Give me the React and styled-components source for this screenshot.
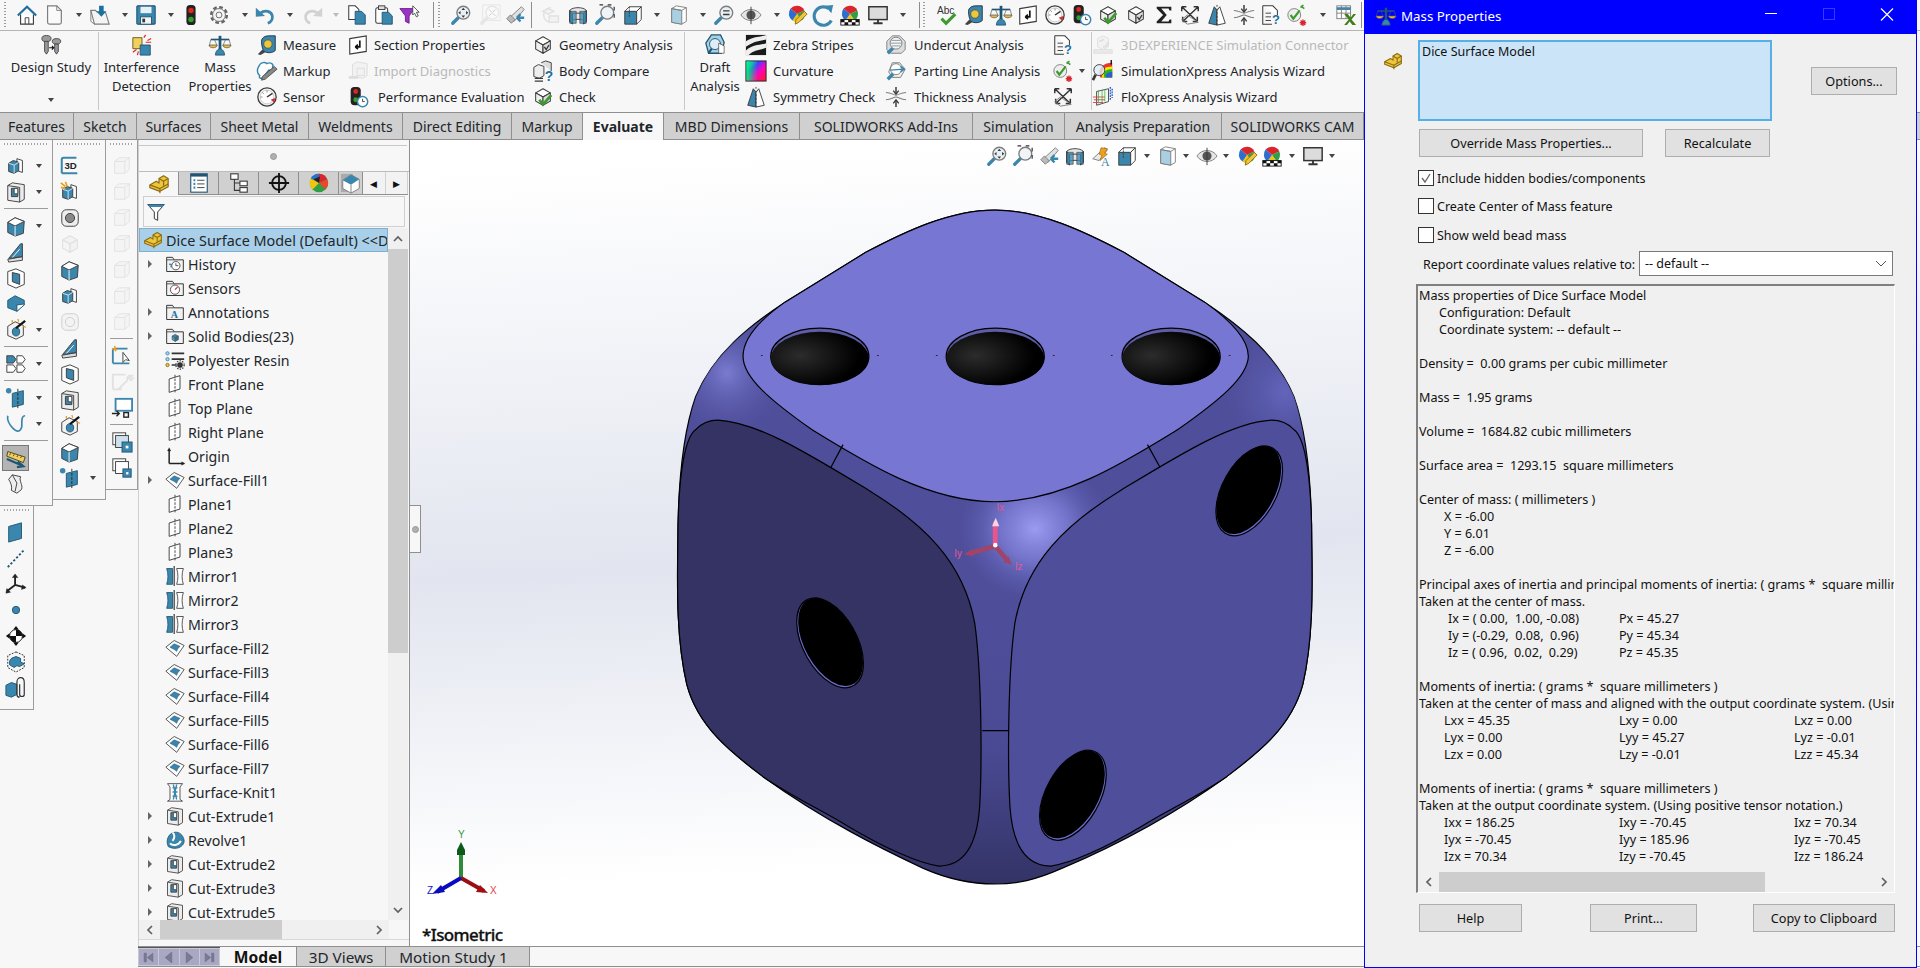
import React from 'react';
import styled, { createGlobalStyle } from 'styled-components';

const B = '#3b86ad';
const LB = '#a9cfe3';
const D = '#3a3a3a';
const G = '#7d7d7d';
const LG = '#c8c8c8';
const Y = '#f0c53c';

const Global = createGlobalStyle`
  html, body { margin: 0; padding: 0; background: #f7f7f7; }
  body { font-family: "Noto Sans", "Open Sans", "Liberation Sans", sans-serif; }
`;

const cube = (a = '#fff', b = '#efefef', c = '#dcdcdc', s = D) => (
  <g stroke={s} strokeWidth="1.1" strokeLinejoin="round">
    <path d="M12 3l8 4.5-8 4.5-8-4.5z" fill={a} />
    <path d="M4 7.5v9l8 4.5v-9z" fill={b} />
    <path d="M20 7.5v9l-8 4.5v-9z" fill={c} />
  </g>
);
const mag = (inner, fill = '#e8f0f5', handle = B, ring = G) => (
  <g>
    <path d="M9 15l-6 6" stroke={handle} strokeWidth="3.6" strokeLinecap="round" />
    <circle cx="14.5" cy="9.5" r="7" fill={fill} stroke={ring} strokeWidth="1.5" />
    {inner}
  </g>
);
const pie = (
  <g>
    <path d="M12 11V2a9 9 0 0 1 8 5z" fill="#d8262c" />
    <path d="M12 11l8-4a9 9 0 0 1-3 11z" fill="#2f9e44" />
    <path d="M12 11l5 7a9 9 0 0 1-10 0z" fill="#f1c40f" />
    <path d="M12 11l-5 7A9 9 0 0 1 5 5z" fill="#2c6fd1" />
    <path d="M12 11L5 5a9 9 0 0 1 7-3z" fill="#d8262c" />
  </g>
);
const folder = (inner) => (
  <g>
    <path d="M2 21V4h7l2 3h11v14z" fill="#f2f2f2" stroke={D} strokeWidth="1.2" />
    <path d="M2 7h9" stroke={D} strokeWidth="1" />
    {inner}
  </g>
);
const blueBox = (
  <g stroke={D} strokeWidth="1" strokeLinejoin="round">
    <path d="M13 4l6 2v13l-6-2z" fill="#fff" />
    <path d="M4 9l5-3 6 2v9l-5 3-6-2z" fill={B} />
    <path d="M4 9l6 2 5-3" fill="none" stroke="#d6e8f2" />
    <path d="M10 11v9" stroke="#d6e8f2" />
  </g>
);
const checkMark = <path d="M8 15l4 5 9-10" fill="none" stroke="#3c9a2e" strokeWidth="3" />;

const ICONS = {
  home: <g><path d="M2 12.5 12 3l10 9.5" fill="none" stroke="#1d6f9e" strokeWidth="2.4" /><path d="M5 11.5V22h14V11.5" fill="#fff" stroke={D} strokeWidth="1.2" /><path d="M10 22v-7h4v7" fill="none" stroke={D} /></g>,
  newDoc: <g><path d="M5 2h10l5 5v13a2 2 0 0 1-2 2H7a2 2 0 0 1-2-2z" fill="#fafafa" stroke={G} strokeWidth="1.3" /><path d="M15 2v5h5" fill="none" stroke={G} /></g>,
  open: <g><path d="M2 7h5l2 2h9l4 13H6z" fill="#f4f4f4" stroke={G} strokeWidth="1.2" /><path d="M2 7v12l4 3" fill="none" stroke={G} /><path d="M11 2h5v6h3l-5.5 6L8 8h3z" fill="#1d6f9e" /></g>,
  save: <g><rect x="2" y="2" width="20" height="20" rx="1" fill={B} stroke="#1f5673" strokeWidth="1.2" /><rect x="6" y="3" width="12" height="7" fill="#e8f0f5" /><rect x="6" y="14" width="12" height="8" fill="#f4f4f4" stroke="#1f5673" /><rect x="8" y="16" width="3" height="4" fill={D} /></g>,
  traffic: <g><rect x="7" y="1" width="10" height="22" rx="4" fill="#222" /><circle cx="12" cy="7" r="3" fill="#e0261c" /><circle cx="12" cy="17" r="3" fill="#32a02c" /></g>,
  gear: <g fill="none" stroke="#666"><circle cx="12" cy="12" r="8.6" strokeWidth="2.6" strokeDasharray="4 2.75" /><circle cx="12" cy="12" r="7" strokeWidth="1" /><circle cx="12" cy="12" r="3.2" strokeWidth="1" /></g>,
  undo: <g><path d="M7 10c5-4 12-2 13 3 .6 4-2 7-5 8" fill="none" stroke={B} strokeWidth="3" /><path d="M2 4v10l10-1z" fill={B} /></g>,
  redo: <g><path d="M17 10c-5-4-12-2-13 3-.6 4 2 7 5 8" fill="none" stroke="#d2d2d2" strokeWidth="3" /><path d="M22 4v10l-10-1z" fill="#d2d2d2" /></g>,
  copy: <g><path d="M3 2h7l4 4v11H3z" fill="#fff" stroke={D} strokeWidth="1.1" /><path d="M10 8h7l4 4v10H10z" fill={B} stroke="#1f5673" /></g>,
  paste: <g><rect x="3" y="4" width="13" height="17" rx="2" fill="#fff" stroke={D} strokeWidth="1.1" /><rect x="6" y="2" width="7" height="4" fill="#ddd" stroke={D} /><path d="M10 9h7l4 4v9H10z" fill={B} stroke="#1f5673" /></g>,
  filterCursor: <g><path d="M1 5h16l-6 8v8l-4-2v-6z" fill="#9a33c4" stroke="#6d1f90" /><path d="M15 2l7 7h-3l2 4-2 1-2-4-2 2z" fill="#fff" stroke={D} strokeWidth=".9" /></g>,
  zoomFit: mag(<g fill={D}><path d="M14.5 4l2 2.5h-4zM14.5 15l2-2.5h-4zM9 9.5l2.5-2v4zM20 9.5l-2.5-2v4z" /></g>),
  zoomArea: <g opacity=".35">{mag(<path d="M11 6l3 3M18 6l-3 3M11 13l3-3M18 13l-3-3" stroke={G} />, '#fff', LG, LG)}<rect x="4" y="1" width="19" height="17" fill="none" stroke={LG} /></g>,
  prevView: <g><path d="M6 15L19 3l3 3-11 13z" fill="#e0e0e0" stroke={G} /><path d="M3 16l4-4 5 5-4 4z" fill="#bbb" stroke={G} /><path d="M22 15H14M14 15l4-4M14 15l4 4" stroke={B} strokeWidth="2.6" fill="none" /></g>,
  rebuildOff: <g opacity=".45" fill="none" stroke={LG} strokeWidth="1.6"><path d="M12 4a8 8 0 1 0 8 8" /><path d="M3 8l6-3 6 3-6 3zM10 13h10v7H10z" fill="#eee" /></g>,
  section: <g stroke={D}><path d="M3 7c3-4 15-4 18 0v12c-3-3-15-3-18 0z" fill="#e7e7e7" /><path d="M3 7c0 1 3 3 3 3v12l-3-3zM21 7l-3 3v12l3-3z" fill={B} /><path d="M6 10h12" /><path d="M3 8h7v13H3zM14 8h7v13h-7z" fill={B} opacity=".75" /></g>,
  zoomSel: <g>{mag(null, '#eef4f8', B, G)}<path d="M6 1h4M15 1h4M22 3v4M22 11v4" stroke="#333" strokeWidth="1.3" /></g>,
  wireCube: <g stroke={D}><path d="M3 8h13v14H3z" fill={B} /><path d="M3 8l5-5h13l-5 5zM16 8l5-5v14l-5 5z" fill="#fff" /><path d="M8 3v11" strokeDasharray="2 1" /></g>,
  dispCube: <g stroke={G}><path d="M4 5l5-3 11 2v15l-5 3-11-2z" fill="#fff" /><path d="M4 5l11 2v15L4 20z" fill={LB} /><path d="M4 5l11 2 5-3" fill="none" /></g>,
  magEq: mag(<path d="M11 7.5h7M11 11.5h7" stroke={D} strokeWidth="1.5" />),
  eye: <g><path d="M1 12c5-8 17-8 22 0-5 8-17 8-22 0z" fill="#e6e6e6" stroke={G} /><circle cx="12" cy="12" r="5" fill="#555" /><path d="M12 3v19" stroke={D} /></g>,
  piePen: <g>{pie}<path d="M10 22l1-5 9-9 3 3-9 9z" fill="#f0c53c" stroke="#8a6d12" /></g>,
  rotate: <g><path d="M20 18a10 10 0 1 1-3-13" fill="none" stroke={B} strokeWidth="3.4" /><path d="M13 2l9-1-2 9z" fill={B} /></g>,
  scene: <g>{pie}<rect x="2" y="17" width="20" height="6" fill="#fff" stroke="#111" /><path d="M2 17h4v3H2zM10 17h4v3h-4zM18 17h4v3h-4zM6 20h4v3H6zM14 20h4v3h-4z" fill="#111" /></g>,
  monitor: <g><rect x="2" y="3" width="20" height="14" fill="#dcdcdc" stroke="#333" strokeWidth="1.6" /><path d="M12 17v4M7 21h10" stroke="#333" strokeWidth="2" /></g>,
  viewAnno: <g><path d="M3 15L16 3l3 2-9 12z" fill="#e9e9e9" stroke={G} /><path d="M12 3l7 1-3 5 3 1-8 7 2-6-3-1z" fill="#f0a020" stroke="#8a5a10" strokeWidth=".6" /><text x="12" y="23" fontFamily="Liberation Serif, serif" fontSize="13" fill="#3b86ad">A</text></g>,
  abc: <g><text x="1" y="11" fontFamily="Liberation Sans, sans-serif" fontSize="11" fill="#333">Abc</text><path d="M6 16l5 5 10-10" fill="none" stroke="#3c9a2e" strokeWidth="3.4" /></g>,
  tape: <g><path d="M6 8c0-4 4-6 8-6h7v16c-3 3-9 3-12 1-2-2-3-7-3-11z" fill={B} stroke="#234" /><circle cx="13" cy="11" r="4.6" fill="#e9c83a" stroke="#555" /><path d="M7 17l-5 5 3 1 5-3z" fill="#444" /></g>,
  scale: <g><path d="M12 2v15" stroke="#1f5673" strokeWidth="3" /><path d="M2 6h20" stroke="#1f5673" strokeWidth="1.8" /><path d="M7 23c0-4 3-7 5-7s5 3 5 7z" fill={B} stroke="#1f5673" /><path d="M0 12h9c0 4-9 4-9 0zM15 12h9c0 4-9 4-9 0z" fill="#e9b93a" stroke="#555" strokeWidth=".8" /><path d="M2 6L.5 12M6 6l2.5 6M18 6l-2.5 6M22 6l1.5 6" stroke="#555" strokeWidth=".7" /></g>,
  sectProp: <g><path d="M3 5l18-3v17L3 22z" fill="#fff" stroke={D} strokeWidth="1.2" /><path d="M14 7v7H9M9 14l3-2.5M9 14l3 2.5" fill="none" stroke="#111" strokeWidth="1.8" /></g>,
  gauge: <g><circle cx="12" cy="12" r="10" fill="#f2f2f2" stroke={D} strokeWidth="1.4" /><circle cx="12" cy="12" r="7.5" fill="#fff" stroke={LG} /><path d="M12 12l6-4" stroke="#333" strokeWidth="1.6" /><path d="M16 15l5-2-1 5z" fill="#d8262c" /><path d="M5 12h2M12 5v2M7 7l1.5 1.5" stroke={G} /></g>,
  perf: <g><rect x="4" y="1" width="11" height="20" rx="4" fill="#222" /><circle cx="9.5" cy="6" r="2.6" fill="#e0261c" /><circle cx="9.5" cy="15" r="2.6" fill="#32a02c" /><circle cx="17" cy="17" r="5.6" fill="#fff" stroke={B} strokeWidth="1.6" /><path d="M17 14v3h2.4" stroke={D} fill="none" /></g>,
  checkCube: <g>{cube()}{checkMark}</g>,
  geomCube: <g>{cube()}<path d="M13.5 14l2 3 3-5" fill="none" stroke="#333" strokeWidth="1.4" /></g>,
  sigma: <path d="M4 3h16v4h-2l-1-2H9l6 7-6 7h8l1-2h2v4H4v-2l7-7-7-7z" fill="#222" />,
  cross: <g fill="none" stroke="#333" strokeWidth="1.6"><path d="M3 3l17 16M21 3L4 19M3 3h5M3 3v5M21 3h-5M21 3v5M4 19v-5M4 19h5M20 19h-5M20 19v-5" /><path d="M9 12l-6 5 6 5 12-2z" stroke={G} strokeWidth="1" /></g>,
  symmetry: <g stroke={D} strokeWidth="1"><path d="M3 21L9 3l3 4v16z" fill={B} /><path d="M21 21L15 3l-3 4v16z" fill="#fff" /><path d="M12 1v22" strokeDasharray="2 2" /></g>,
  thickness: <g fill="none" stroke={D} strokeWidth="1.1"><path d="M1 7c6 0 8 3 11 3s5-3 11-3M1 15c6 0 8-3 11-3s5 3 11 3" stroke={G} /><path d="M12 1v7M12 23v-7" strokeWidth="1.6" /><path d="M9 5l3 4 3-4M9 19l3-4 3 4" strokeWidth="1.4" /></g>,
  docQ: <g><path d="M3 2h11l5 5v5" fill="#fff" stroke={D} strokeWidth="1.1" /><path d="M3 2v20h10" fill="none" stroke={D} strokeWidth="1.1" /><path d="M6 10h6M6 14h6M6 18h6" stroke={D} /><text x="13" y="22" fontFamily="Liberation Sans, sans-serif" fontWeight="700" fontSize="14" fill="#1d6f9e">?</text></g>,
  checkX: <g><circle cx="9" cy="12" r="7" fill="#eee" stroke={G} />{<path d="M5 12l3 4 7-9" fill="none" stroke="#3c9a2e" strokeWidth="2.4" />}<path d="M19 1l-3 3M16 2l4 3" stroke="#3c9a2e" strokeWidth="1.6" /><path d="M16 18l5 5M21 18l-5 5M18.5 17v7M15 20.5h7" stroke="#d8262c" strokeWidth="1.5" /></g>,
  tableX: <g><rect x="2" y="2" width="15" height="14" fill="#fff" stroke={G} /><path d="M2 5h15" stroke={B} strokeWidth="3" /><path d="M2 10h15M7 2v14M12 2v14" stroke={G} /><path d="M10 11h4l3 4 3-4h3l-5 6 5 6h-4l-3-4-3 4h-3l5-6z" fill="#3f7f18" /></g>,
  bolts: <g fill="#9a9a9a" stroke={D} strokeWidth=".9"><ellipse cx="7" cy="5" rx="5" ry="3.4" /><path d="M5 8h4v11l-2 3-2-3z" /><ellipse cx="18" cy="8" rx="4.6" ry="3" /><path d="M16 11h4v8l-2 3-2-3z" /><path d="M10 15h5M13 13l2 2-2 2" fill="none" strokeWidth="1.2" stroke="#111" /></g>,
  interference: <g><path d="M2 4h10v12H2z" fill="#f0d060" stroke="#6d5a10" /><path d="M10 12h11v11H10z" fill={B} stroke="#1f5673" /><path d="M14 4l2-3M18 7l4-2M16 9h6M2 20l4-3M7 23l1-4" stroke="#e0261c" strokeWidth="1.3" /></g>,
  markup: <g><path d="M3 7c2-5 7-5 9-3 3-2 8 0 6 4 2 2 0 4-4 3l-7 9c-3 0-4-1-3-3C1 15 1 10 3 7z" fill="#fff" stroke={B} strokeWidth="1.6" /><path d="M6 22l1-4 13-11 3 3-13 11z" fill="#888" stroke={D} strokeWidth=".8" /></g>,
  importDiag: <g opacity=".55"><path d="M6 5l5-3 11 2v13l-5 3-11-2z" fill="#eee" stroke={LG} /><path d="M2 19h10" stroke={LG} strokeWidth="3" /><path d="M11 9h8v8h-8z" fill="none" stroke={LG} /></g>,
  bodyCompare: <g><path d="M2 8l5-3 6 2v10l-5 3-6-2z" fill="#eee" stroke={D} /><path d="M10 3l5-2 6 2v9" fill="#ddd" stroke={D} /><path d="M3 20h9M3 23h9" stroke={D} strokeWidth="1.4" /><text x="14" y="23" fontFamily="Liberation Sans, sans-serif" fontWeight="700" fontSize="15" fill="#1d6f9e">?</text></g>,
  draft: <g><path d="M8 1h10l4 8-3 12H5L2 10z" fill={LB} stroke="#1f5673" strokeWidth="1.4" /><path d="M5 21l4-6" stroke="#1f5673" strokeWidth="2.4" /><circle cx="12" cy="11" r="6" fill="#dfeef6" stroke="#1f5673" /><path d="M16 10l6 3v8h-6z" fill="#fff" stroke={D} strokeWidth=".7" /></g>,
  zebra: <g><rect x="1" y="1" width="22" height="22" fill="#1a1a1a" /><path d="M1 8C8 3 14 4 23 1v5C14 8 9 8 1 14zM1 18c8-7 14-5 22-8v5c-9 3-13 2-19 8H1z" fill="#eee" /></g>,
  curvature: <g><defs><linearGradient id="rainbow" x1="0" y1="0" x2="1" y2="1"><stop offset="0" stopColor="#00e0ff" /><stop offset=".35" stopColor="#4040ff" /><stop offset=".6" stopColor="#ff00c0" /><stop offset="1" stopColor="#ff2020" /></linearGradient><linearGradient id="rainbowG" x1="0" y1="0" x2="1" y2="0"><stop offset="0" stopColor="#00ff60" stopOpacity=".9" /><stop offset=".6" stopColor="#00ff60" stopOpacity="0" /></linearGradient></defs><rect x="1" y="1" width="22" height="22" fill="url(#rainbow)" stroke="#222" /><rect x="1.5" y="1.5" width="21" height="21" fill="url(#rainbowG)" /></g>,
  undercut: <g><path d="M8 2h8l6 6v9l-4 4H6l-4-4V8z" fill="#ddd" stroke={G} /><path d="M9 15l-6 6" stroke={B} strokeWidth="3.6" /><circle cx="12" cy="10" r="6.5" fill="#eef4f8" stroke={G} /><path d="M7 7h10M6 10h12M7 13h10" stroke={G} strokeWidth=".8" /></g>,
  parting: <g><path d="M8 3h8l6 7-5 9H8l-4-6z" fill="#eee" stroke={G} /><path d="M9 15l-6 6" stroke={B} strokeWidth="3.6" /><circle cx="12" cy="10" r="6" fill="#fff" stroke={G} /><path d="M6 11l14-1M17 7l4 3-4 3" fill="none" stroke={B} strokeWidth="1.5" /></g>,
  x3d: <g opacity=".5"><path d="M2 17h20v4H2z" fill="#ddd" stroke={LG} /><path d="M6 5l6-3 6 3v9l-6 3-6-3z" fill="#eee" stroke={LG} /><path d="M8 8l5-2M12 14c4 0 5-3 5-5" fill="none" stroke={LG} strokeWidth="2" /></g>,
  simX: <g><path d="M8 14C8 8 13 3 22 3v16H9z" fill="#e33" /><path d="M11 15c0-5 3-8 11-8v12H11z" fill="#ee0" /><path d="M13 16c0-4 3-6 9-6v9h-9z" fill="#2ab02a" /><path d="M15 17c0-2 3-4 7-4v6h-7z" fill="#2a5fd0" /><circle cx="8" cy="11" r="6" fill="#dfeef6" fillOpacity=".8" stroke={D} /><path d="M4 16l-3 6" stroke={D} strokeWidth="3" /><path d="M21 0v5" stroke="#111" strokeWidth="1.5" /></g>,
  floX: <g fill="none"><path d="M5 6l13-3v14L5 21z" stroke="#444" /><path d="M1 12h13M2 15h12M1 18h11" stroke="#d8404a" /><path d="M7 5v14M11 4v14M14 4v13" stroke="#2ab02a" strokeWidth=".8" /><path d="M20 1v15M22 3v10" stroke="#2a5fd0" strokeWidth="1.5" strokeDasharray="2 1" /></g>,
  part: <g stroke="#8a6d12" strokeWidth="1.3" strokeLinejoin="round"><path d="M2 13l7-4 3 2v-5l5-3 5 3v9l-9 5-11-4z" fill={Y} /><path d="M2 13l11 4 9-5" fill="none" /><path d="M13 17v5" /><path d="M12 6l5 3 5-3M17 9v5" fill="none" /></g>,
  fHist: folder(<g><circle cx="13" cy="14" r="5" fill="#fff" stroke={D} /><path d="M13 11v3h3" stroke={D} fill="none" /><path d="M5 12l3 1-1 3" fill="none" stroke={B} strokeWidth="1.6" /></g>),
  fSens: folder(<g><circle cx="12" cy="14" r="5.5" fill="#fff" stroke={D} /><path d="M12 14l3-3" stroke="#d8262c" strokeWidth="1.4" /></g>),
  fAnno: folder(<text x="7" y="19.5" fontFamily="Liberation Serif, serif" fontWeight="700" fontSize="12" fill="#1d6f9e">A</text>),
  fBody: folder(<g transform="translate(6.5 8.5) scale(.48)">{cube(B, '#4f9ac0', '#2d6f92')}</g>),
  material: <g><circle cx="3" cy="4" r="2" fill={LB} stroke={B} /><circle cx="3" cy="11" r="2" fill={LB} stroke={B} /><circle cx="3" cy="18" r="2" fill={Y} stroke="#8a6d12" /><path d="M8 4h15M8 11h15M8 18h6" stroke="#333" strokeWidth="2" /><circle cx="18" cy="18" r="3.4" fill="#333" /><circle cx="18" cy="18" r="5" fill="none" stroke="#333" strokeWidth="1.5" strokeDasharray="1.6 1.6" /></g>,
  plane: <g fill="none" stroke={D} strokeWidth="1.1"><path d="M5 6l13-4v16L5 22z" fill="#fff" /><path d="M12 1v22" strokeDasharray="3 1.5" /></g>,
  origin: <g stroke="#222" strokeWidth="1.8" fill="#222"><path d="M5 21V4M5 21h17" /><path d="M3 6l2-4 2 4zM20 19l4 2-4 2z" strokeWidth=".4" /></g>,
  fill: <g><path d="M1 11L11 3l12 6-9 13z" fill="#fff" stroke={D} /><path d="M6 11l5-4 7 3c-2 2-3 3-4 6-3-3-5-3-8-5z" fill={B} stroke="#1f5673" strokeWidth=".6" /></g>,
  mirror: <g><path d="M2 3h7v19H2c2-6 2-13 0-19z" fill={B} stroke="#1f5673" /><path d="M11 0v24" stroke="#222" strokeWidth="1.3" /><path d="M14 3h8c-2 6-2 13 0 19h-8c2-6 2-13 0-19z" fill="#fff" stroke={D} /></g>,
  knit: <g><path d="M3 2h18l-3 4v15l3 2H3l3-2V6z" fill="#fff" stroke={D} /><path d="M10 3l4 18M14 3l-4 18M9 7h6M9 12h6M9 17h6" stroke={B} strokeWidth="1.6" /></g>,
  cut: <g stroke={D}><path d="M3 5l5-3 13 2v16l-5 3-13-2z" fill="#ececec" /><path d="M3 5l13 2v16" fill="none" /><path d="M7 8h7v9H7z" fill={B} /><path d="M10 8h4v6h-4z" fill="#fff" /></g>,
  revolve: <g><path d="M4 20C1 14 3 7 8 4c7-4 14 1 15 9 0 5-5 9-11 9-3 0-6-1-8-2z" fill={B} stroke="#1f5673" /><path d="M6 16c3 3 10 3 13-3" fill="none" stroke="#fff" strokeWidth="2.4" /><path d="M9 3c3 2 3 7 0 10" fill="none" stroke="#fff" strokeWidth="2.4" /></g>,
  list: <g><rect x="3" y="2" width="18" height="20" fill="#fff" stroke="#1f5673" strokeWidth="1.2" /><path d="M3 3.5h18" stroke="#1f5673" strokeWidth="3" /><path d="M6 9h2M6 13h2M6 17h2" stroke={B} strokeWidth="2.4" /><path d="M10 9h8M10 13h8M10 17h8" stroke={D} /></g>,
  treeCfg: <g fill="#fff" stroke={D} strokeWidth="1.2"><rect x="3" y="2" width="8" height="6" /><rect x="13" y="10" width="8" height="5" /><rect x="13" y="17" width="8" height="5" /><path d="M7 8v12h6M7 12h6" fill="none" /></g>,
  target: <g fill="none" stroke="#111" strokeWidth="2"><circle cx="12" cy="12" r="7.5" /><path d="M12 1v22M1 12h22" /></g>,
  colorPie: <g><circle cx="12" cy="12" r="10" fill="#2f9e44" /><path d="M12 12V2a10 10 0 0 1 9 6z" fill="#d8262c" /><path d="M12 12L3 7a10 10 0 0 1 9-5z" fill="#2c6fd1" /><path d="M12 12l9-4a10 10 0 0 1-2 11z" fill="#e64a2a" /><path d="M12 12l-7 7a10 10 0 0 1-2-12z" fill="#f1c40f" /><path d="M12 12l-6-4 7-3z" fill="#222" /></g>,
  dim: <g><rect x="1" y="2" width="13" height="20" fill="#aaa" /><path d="M3 9l9-6 9 5v10l-9 5-9-5z" fill="#fff" stroke={G} /><path d="M3 9l9 5 9-6-9-5z" fill={B} /><path d="M12 14v9" stroke={G} /></g>,
  funnel: <g><path d="M2 3h20l-8 9v10l-4-2v-8z" fill="#fff" stroke={D} strokeWidth="1.2" /><path d="M2 3h20l-2 3H4z" fill={B} /></g>,
  boss: blueBox,
  chamfer: <g><path d="M3 8l8-5 10 4-1 13-9 3-8-4z" fill={B} stroke={D} /><path d="M3 8l8 4 10-5-10-4z" fill="#fff" stroke={D} /><path d="M11 12v11" stroke="#fff" /></g>,
  rib: <g stroke={D}><path d="M3 20l16-3v4L4 23z" fill="#ddd" /><path d="M4 19L17 3h2v14z" fill={B} /><path d="M8 18l8-9" stroke="#fff" /></g>,
  shell: <g stroke={D}><path d="M3 5l9-3 9 4v13l-9 4-9-4z" fill="#fff" /><path d="M8 6l8 2v11l-8-3z" fill={B} /></g>,
  block: <g stroke="#1f5673"><path d="M3 8l8-5 10 5v5l-8 7-10-4z" fill={B} /><path d="M13 20l8-7" stroke="#fff" /><path d="M13 13v7l8-7v-1z" fill="#fff" /></g>,
  wizard: <g><path d="M3 8l8-5 9 4v11l-8 4-9-4z" fill="#f3f3f3" stroke={D} /><ellipse cx="12" cy="14" rx="4" ry="4.5" fill={B} stroke="#1f5673" /><path d="M12 10L22 2" stroke="#111" strokeWidth="2.4" /><path d="M8 1v3M14 0l1 3M20 8l3 1" stroke="#e8a020" strokeWidth="1.4" /></g>,
  pattern: <g stroke={D} strokeWidth="1" fill="#fff"><path d="M2 3h7l3 4-3 4H2z" fill={B} /><path d="M13 3h6l3 4-3 4h-6zM2 13h7l3 4-3 4H2zM13 13h6l3 4-3 4h-6z" /></g>,
  planeRef: <g><circle cx="4" cy="4" r="3" fill={B} /><path d="M8 7l12-3v15L8 22z" fill={B} stroke="#1f5673" /><path d="M14 2v21" stroke="#222" strokeDasharray="3 1.5" /></g>,
  curve: <path d="M3 3c-1 5 2 10 6 14 3 3 6 4 8 1 3-3 0-8 2-13 1-2 2-2 3-2" fill="none" stroke={B} strokeWidth="1.8" />,
  ruler: <g><path d="M3 5l19 6-2 6L2 10z" fill="#f0d060" stroke="#4a3f10" /><path d="M6 7l-1 2M10 8l-1 2M14 9l-1 2M18 10l-1 2" stroke="#4a3f10" /><path d="M2 13l16 7M14 16l6 5-7 1" fill="none" stroke="#1f5673" strokeWidth="2.4" /></g>,
  deform: <g><path d="M8 2l9 2c-2 5 3 9 1 14l-5 4-6-3c1-5-1-9-3-12z" fill="#eee" stroke={D} /><path d="M8 2l5 9-2 9" fill="none" stroke={D} /></g>,
  sketch3d: <g><path d="M3 20V5q0-2 2-2h14M3 20h17" fill="none" stroke={B} strokeWidth="2.2" /><text x="6" y="15" fontFamily="Liberation Sans, sans-serif" fontWeight="700" fontSize="10.5" fill="#222">3D</text></g>,
  sketchStar: <g>{blueBox}<path d="M7 1l2 5M2 7l5 1M2 2l5 4" stroke="#e8a020" strokeWidth="1.8" /></g>,
  round: <g><rect x="3" y="3" width="18" height="18" rx="5" fill="#eee" stroke={D} /><circle cx="12" cy="12" r="5" fill="#888" stroke={D} /></g>,
  roundOff: <g opacity=".35"><rect x="3" y="3" width="18" height="18" rx="5" fill="#eee" stroke={G} /><circle cx="12" cy="12" r="5" fill="#eee" stroke={G} /></g>,
  cubeOff: <g opacity=".45"><path d="M4 7l5-4h11v13l-5 4H4z" fill="#f2f2f2" stroke={LG} /><path d="M4 7h11v13M15 7l5-4" fill="none" stroke={LG} /></g>,
  starOff: <g opacity=".5">{cube('#eee', '#f5f5f5', '#eee', LG)}</g>,
  gearOff: <g opacity=".45"><path d="M2 20V4h14M2 20h10" fill="none" stroke={LG} strokeWidth="2" /><path d="M8 20l10-10c-1-4 2-6 5-5l-3 3 2 2 3-3" fill="none" stroke={LG} strokeWidth="2" /></g>,
  newSketch: <g><path d="M2 20V6q0-2 2-2h14M2 20h18" fill="none" stroke={B} strokeWidth="2" /><path d="M4 1l1 6M1 4l6 1" stroke="#e8a020" strokeWidth="1.6" /><path d="M13 8v11l3-3 4 1z" fill="#fff" stroke={D} /></g>,
  screenSwitch: <g><rect x="5" y="2" width="18" height="13" fill="#fff" stroke={B} strokeWidth="2" /><path d="M1 18h8M6 15l3 3-3 3" fill="none" stroke="#222" strokeWidth="1.5" /><rect x="14" y="17" width="5" height="5" fill="none" stroke="#222" strokeWidth="1.5" /></g>,
  winStack: <g><rect x="2" y="2" width="14" height="13" fill="#fff" stroke={D} /><rect x="5" y="5" width="14" height="13" fill="#cfe1ec" stroke={D} /><rect x="12" y="12" width="11" height="11" fill={B} stroke="#1f5673" /><rect x="16" y="16" width="3" height="3" fill="#fff" /></g>,
  winStack2: <g><rect x="2" y="2" width="14" height="13" fill="#fff" stroke={D} /><rect x="5" y="5" width="14" height="13" fill="#fff" stroke={D} /><rect x="13" y="13" width="9" height="9" fill={B} stroke="#1f5673" /><rect x="16.5" y="16.5" width="2.5" height="2.5" fill="#fff" /></g>,
  refPlane: <path d="M4 6l14-4v17L4 23z" fill={B} stroke="#1f5673" />,
  axisLine: <path d="M3 22L21 3" stroke="#1f5673" strokeWidth="2" strokeDasharray="2.5 2" />,
  triad: <g stroke="#222" strokeWidth="2" fill="#222"><path d="M11 13V3M11 13L2 20M11 13l11 3" /><path d="M8 5l3-4 3 4zM2 17l-1 5 5-1zM19 13l4 3-5 2z" strokeWidth=".5" /></g>,
  point: <circle cx="12" cy="12" r="4" fill={B} stroke="#1f5673" />,
  com: <g><circle cx="12" cy="12" r="7" fill="#fff" stroke="#111" /><path d="M12 5a7 7 0 0 1 7 7h-7zM12 19a7 7 0 0 1-7-7h7z" fill="#111" /><path d="M12 1l3 4H9zM12 23l3-4H9zM1 12l4-3v6zM23 12l-4-3v6z" fill="#111" /></g>,
  dashCube: <g><path d="M12 1l9 4v13l-9 5-9-5V5z" fill="none" stroke="#222" strokeDasharray="2 1.4" /><path d="M7 8l5-2 5 2v4l4 2-5 3-3-1-3 2-5-3v-4z" fill={B} stroke="#1f5673" /></g>,
  boxClip: <g>{<path d="M1 9l6-3 6 2v11l-6 3-6-2z" fill={B} stroke="#1f5673" />}<path d="M16 22c-3 0-3-2-3-3V6c0-7 8-7 8 0v13c0 3-5 3-5 0V8" fill="none" stroke="#333" strokeWidth="1.3" /></g>,
};

const Svg = styled.svg`
  display: block;
  flex: none;
  overflow: visible;
`;

const Icon = ({ name, size = 22 }) => (
  <Svg width={size} height={size} viewBox="0 0 24 24">{ICONS[name]}</Svg>
);

const Page = styled.div`
  position: relative;
  width: 1920px;
  height: 968px;
  overflow: hidden;
  background: #f7f7f7;
  color: #22262b;
  font-size: 13px;
`;

// a flat run of icons laid out from the centre given for each one
const Strip = styled.div`
  display: flex;
  align-items: center;
  height: ${(p) => p.$h}px;
`;

const Slot = styled.div`
  flex: none;
  margin-left: ${(p) => p.$ml}px;
  width: ${(p) => p.$w}px;
  display: flex;
  justify-content: center;
`;

const Caret = styled.span`
  display: block;
  width: 0;
  height: 0;
  border-left: 3.5px solid transparent;
  border-right: 3.5px solid transparent;
  border-top: 4px solid ${(p) => (p.$off ? '#bbb' : '#444')};
`;

const Divider = styled.span`
  display: block;
  width: 1px;
  height: 26px;
  background: #8d8d8d;
`;

const Grip = styled.span`
  display: block;
  width: 2px;
  height: 26px;
  background: repeating-linear-gradient(#9a9a9a 0 1px, transparent 1px 3px);
`;

const iconRun = (items) => {
  let end = 0;
  return items.map(([name, center, size], i) => {
    const w = name === 'caret' || name === 'caretOff' ? 8 : name === 'div' ? 1 : name === 'grip' ? 2 : 22;
    const ml = Math.round(center - w / 2 - end);
    end = center + w / 2;
    let body = <Icon name={name} size={size || 22} />;
    if (name === 'caret') body = <Caret />;
    if (name === 'caretOff') body = <Caret $off />;
    if (name === 'div') body = <Divider />;
    if (name === 'grip') body = <Grip />;
    return <Slot key={i} $ml={ml} $w={w}>{body}</Slot>;
  });
};

const topItems = [
  ['grip', 5], ['home', 27], ['newDoc', 54], ['caret', 79], ['open', 100], ['caret', 125], ['save', 146], ['caret', 171],
  ['traffic', 191], ['gear', 219], ['caret', 245], ['undo', 265], ['caret', 290], ['redo', 313], ['caretOff', 336],
  ['copy', 357], ['paste', 384], ['filterCursor', 410], ['div', 433], ['grip', 438], ['zoomFit', 460], ['zoomArea', 489],
  ['prevView', 514], ['div', 530], ['rebuildOff', 549], ['section', 576], ['zoomSel', 603], ['wireCube', 631],
  ['caret', 655], ['dispCube', 677], ['caret', 701], ['magEq', 722], ['eye', 749], ['caret', 775], ['piePen', 795],
  ['rotate', 822], ['scene', 848], ['monitor', 876], ['caret', 901], ['div', 917], ['grip', 921], ['abc', 944],
  ['tape', 971], ['scale', 998], ['sectProp', 1025], ['gauge', 1052], ['perf', 1078], ['checkCube', 1105],
  ['geomCube', 1133], ['sigma', 1161], ['cross', 1187], ['symmetry', 1214], ['thickness', 1241], ['docQ', 1268],
  ['checkX', 1294], ['caret', 1320], ['tableX', 1343], ['div', 1358],
];

const viewItems = [
  ['zoomFit', 998], ['zoomSel', 1024], ['prevView', 1050], ['section', 1076], ['viewAnno', 1102], ['wireCube', 1128],
  ['caret', 1148], ['dispCube', 1169], ['caret', 1187], ['eye', 1208], ['caret', 1227], ['piePen', 1248], ['scene', 1273],
  ['caret', 1293], ['monitor', 1314], ['caret', 1333],
];

const TopBar = styled(Strip)`
  border-bottom: 1px solid #b4b4b4;
`;

const Ribbon = styled.div`
  display: flex;
  height: 81px;
`;

const BigButton = styled.div`
  flex: none;
  width: ${(p) => p.$w}px;
  display: flex;
  flex-direction: column;
  align-items: center;
  padding-top: 3px;
  padding-left: ${(p) => p.$pl || 0}px;
  box-sizing: border-box;
  line-height: 19px;
  text-align: center;
`;

const BigIconWrap = styled.div`
  height: 23px;
  margin-bottom: 1px;
`;

const BigCaret = styled.div`
  margin-top: 21px;
`;

const RibbonRule = styled.div`
  flex: none;
  width: 1px;
  margin: 1px 0 2px;
  background: #c9c9c9;
`;

const SmallColumn = styled.div`
  flex: none;
  width: ${(p) => p.$w}px;
  display: flex;
  flex-direction: column;
  padding-top: 1px;
`;

const SmallRow = styled.div`
  height: 26px;
  display: flex;
  align-items: center;
  gap: ${(p) => p.$gap || 5}px;
  white-space: nowrap;
  color: ${(p) => (p.$off ? '#b9b9b9' : 'inherit')};
`;

const TabBar = styled.div`
  display: flex;
  height: 28px;
  box-sizing: border-box;
  border-top: 1px solid #8f8f8f;
  border-bottom: 1px solid #8f8f8f;
  background: #d0d0d0;
  font-size: 14px;
`;

const MainTab = styled.div`
  flex: none;
  width: ${(p) => p.$w}px;
  box-sizing: border-box;
  border-right: 1px solid #8f8f8f;
  display: flex;
  align-items: center;
  justify-content: center;
  white-space: nowrap;
  overflow: hidden;
  font-weight: ${(p) => (p.$active ? 700 : 400)};
  background: ${(p) => (p.$active ? '#f7f7f7' : 'transparent')};
  height: ${(p) => (p.$active ? 27 : 26)}px;
`;

const Workspace = styled.div`
  display: flex;
  height: 828px;
`;

const ToolDock = styled.div`
  flex: none;
  width: 138px;
  display: flex;
  align-items: flex-start;
`;

const DockStack = styled.div`
  flex: none;
  width: 53px;
  display: flex;
  flex-direction: column;
`;

const Palette = styled.div`
  flex: none;
  width: ${(p) => p.$w}px;
  height: ${(p) => p.$h}px;
  box-sizing: border-box;
  border-right: 1px solid #9c9c9c;
  border-bottom: 1px solid #9c9c9c;
  padding-top: 13px;
  position: relative;
  &::before {
    content: '';
    position: absolute;
    left: 4px;
    right: 4px;
    top: 3px;
    height: 2px;
    background: repeating-linear-gradient(90deg, #a5a5a5 0 1px, transparent 1px 3px);
  }
`;

const PaletteRow = styled.div`
  height: 26px;
  display: flex;
  align-items: center;
  justify-content: flex-start;
  padding-left: ${(p) => p.$pl || 5}px;
  box-sizing: border-box;
`;

const PaletteButton = styled.div`
  width: 27px;
  height: 26px;
  margin-left: -3px;
  display: flex;
  align-items: center;
  justify-content: center;
  box-sizing: border-box;
  ${(p) => p.$active && 'background: #b4b4b4; border: 1px solid #777;'}
`;

const PaletteCaret = styled.span`
  margin-left: ${(p) => p.$ml || 7}px;
`;

const PaletteRule = styled.div`
  height: 1px;
  margin: 3px 4px 4px;
  background: #9c9c9c;
`;

const RightPane = styled.div`
  flex: 1;
  display: flex;
  flex-direction: column;
  min-width: 0;
`;

const PaneRow = styled.div`
  flex: none;
  height: 806px;
  display: flex;
`;

const TreePanel = styled.div`
  flex: none;
  width: 272px;
  box-sizing: border-box;
  display: flex;
  flex-direction: column;
  border-left: 1px solid #cfcfcf;
  border-right: 1px solid #8f8f8f;
  background: #f7f7f7;
`;

const SplitHeader = styled.div`
  flex: none;
  height: 31px;
  margin: 5px 2px 0 0;
  box-sizing: border-box;
  border-top: 1px solid #c8c8c8;
  display: flex;
  justify-content: center;
  padding-top: 7px;
`;

const SplitDot = styled.span`
  display: block;
  width: 5px;
  height: 5px;
  border-radius: 50%;
  background: #b0b0b0;
  border: 1px solid #999;
`;

const TreeTabs = styled.div`
  flex: none;
  display: flex;
  height: 24px;
  margin-top: -5px;
  border-top: 1px solid #bcbcbc;
  box-sizing: border-box;
`;

const TreeTab = styled.div`
  flex: none;
  width: ${(p) => p.$w || 40}px;
  overflow: hidden;
  box-sizing: border-box;
  display: flex;
  align-items: center;
  justify-content: center;
  background: ${(p) => (p.$active ? '#f7f7f7' : '#d0d0d0')};
  border-right: 1px solid #8f8f8f;
  border-bottom: ${(p) => (p.$active ? 'none' : '1px solid #8f8f8f')};
`;

const TreeScroller = styled.div`
  flex: none;
  width: 45px;
  display: flex;
  background: #f2f2f2;
  border-bottom: 1px solid #8f8f8f;
`;

const ScrollerButton = styled.div`
  flex: 1;
  display: flex;
  align-items: center;
  justify-content: center;
  border-right: 1px solid #d0d0d0;
  font-size: 9px;
  color: #111;
`;

const FilterBox = styled.div`
  flex: none;
  height: 31px;
  margin: 1px 4px 1px 4px;
  box-sizing: border-box;
  border: 1px solid #cfcfcf;
  display: flex;
  align-items: center;
  padding-left: 2px;
`;

const TreeBody = styled.div`
  flex: 1;
  min-height: 0;
  display: flex;
`;

const TreeList = styled.div`
  flex: none;
  width: 249px;
  overflow: hidden;
`;

const RootRow = styled.div`
  height: 24px;
  box-sizing: border-box;
  background: #a9cfe9;
  border: 1px solid #7fb0d2;
  display: flex;
  align-items: center;
  gap: 3px;
  padding-left: 3px;
  white-space: nowrap;
  overflow: hidden;
  font-size: 14.4px;
`;

const TreeRow = styled.div`
  height: 24px;
  display: flex;
  align-items: center;
  white-space: nowrap;
  font-size: 14.2px;
`;

const Expander = styled.span`
  flex: none;
  width: 26px;
  display: flex;
  justify-content: flex-end;
  padding-right: 13px;
  box-sizing: border-box;
  &::before {
    content: '';
    display: ${(p) => (p.$show ? 'block' : 'none')};
    border-left: 4px solid #666;
    border-top: 4px solid transparent;
    border-bottom: 4px solid transparent;
  }
`;

const RowLabel = styled.span`
  margin-left: 3px;
`;

const VScroll = styled.div`
  flex: none;
  width: 20px;
  display: flex;
  flex-direction: column;
  background: #f0f0f0;
`;

const ScrollArrow = styled.div`
  flex: none;
  height: 21px;
  display: flex;
  align-items: center;
  justify-content: center;
`;

const VThumb = styled.div`
  flex: none;
  height: 404px;
  background: #cdcdcd;
`;

const VTrack = styled.div`
  flex: 1;
`;

const HScroll = styled.div`
  flex: none;
  height: 19px;
  display: flex;
  margin-right: 20px;
  background: #f0f0f0;
`;

const HArrow = styled.div`
  flex: none;
  width: ${(p) => p.$w}px;
  display: flex;
  align-items: center;
  justify-content: center;
`;

const HThumb = styled.div`
  flex: none;
  width: ${(p) => p.$w}px;
  background: #cdcdcd;
`;

const TreeFoot = styled.div`
  flex: none;
  height: 6px;
  border-top: 1px solid #d8d8d8;
`;

const Viewport = styled.div`
  flex: 1;
  position: relative;
  overflow: hidden;
  background: linear-gradient(177deg, #fff 4%, #e2e5ef 50%, #fff 85%);
`;

const ViewBar = styled(Strip)`
  position: absolute;
  left: -1px;
  top: 5px;
  margin-left: -410px;
`;

const SplitHandle = styled.div`
  position: absolute;
  left: 0;
  top: 365px;
  width: 11px;
  height: 48px;
  box-sizing: border-box;
  background: #f7f7f7;
  border: 1px solid #8f8f8f;
  border-left: none;
  display: flex;
  align-items: center;
  justify-content: center;
`;

const DiceSvg = styled.svg`
  position: absolute;
  left: 0;
  top: 0;
`;

const AxisSvg = styled.svg`
  position: absolute;
  left: 20px;
  top: 688px;
  overflow: visible;
`;

const ViewName = styled.div`
  position: absolute;
  left: 12px;
  top: 783px;
  font-size: 17px;
  font-weight: 500;
  letter-spacing: -0.6px;
  -webkit-text-stroke: 0.3px #111;
  color: #111;
`;

const BottomTabs = styled.div`
  flex: none;
  height: 21px;
  display: flex;
  box-sizing: border-box;
  border-top: 1px solid #8f8f8f;
  border-bottom: 1px solid #8f8f8f;
  background: #f7f7f7;
`;

const NavCluster = styled.div`
  flex: none;
  width: 82px;
  display: flex;
  gap: 1px;
  padding: 1px;
  box-sizing: border-box;
  border-top: 1px solid #555;
  background: #c9c9d4;
`;

const NavButton = styled.div`
  flex: 1;
  background: #a8a8c4;
  display: flex;
  align-items: center;
  justify-content: center;
`;

const SheetTab = styled.div`
  flex: none;
  width: ${(p) => p.$w}px;
  box-sizing: border-box;
  padding-right: ${(p) => p.$pr || 0}px;
  display: flex;
  align-items: center;
  justify-content: center;
  white-space: nowrap;
  font-size: ${(p) => (p.$active ? 15.6 : 15.3)}px;
  border-right: 1px solid #8f8f8f;
  background: ${(p) => (p.$active ? '#f7f7f7' : '#d0d0d0')};
  font-weight: ${(p) => (p.$active ? 700 : 400)};
  color: ${(p) => (p.$active ? '#111' : 'inherit')};
`;

/* mass properties dialog */

const Dialog = styled.div`
  position: absolute;
  left: 1364px;
  top: 0;
  width: 553px;
  height: 968px;
  box-sizing: border-box;
  border: 1px solid #0000ff;
  border-top: none;
  background: #f0f0f0;
  display: flex;
  flex-direction: column;
  font-size: 12.5px;
  color: #111;
`;

const TitleBar = styled.div`
  flex: none;
  height: 34px;
  background: #0000ff;
  display: flex;
  align-items: center;
  padding: 0 0 2px 11px;
  box-sizing: border-box;
  color: #fff;
  font-size: 13.3px;
`;

const TitleText = styled.span`
  margin-left: 5px;
  flex: 1;
`;

const WinButton = styled.svg`
  flex: none;
  width: 58px;
  height: 34px;
`;

const DialogBody = styled.div`
  flex: 1;
  padding-top: 6px;
  display: flex;
  flex-direction: column;
`;

const FormRow = styled.div`
  display: flex;
  align-items: ${(p) => p.$align || 'center'};
  margin-top: ${(p) => p.$mt || 0}px;
  padding-left: ${(p) => (p.$flush ? 0 : p.$pl || 53)}px;
  flex: none;
`;

const CheckRow = styled(FormRow)`
  height: 16px;
  line-height: 18px;
  align-items: flex-start;
`;

const PartSlot = styled.div`
  flex: none;
  width: 53px;
  padding: 11px 0 0 18px;
  box-sizing: border-box;
`;

const SelectionBox = styled.div`
  flex: none;
  width: 354px;
  height: 81px;
  box-sizing: border-box;
  background: #cce4f7;
  border: 2px solid #56b0e8;
  padding: 1px 2px 0;
  line-height: 17px;
`;

const Button = styled.div`
  flex: none;
  width: ${(p) => p.$w}px;
  height: 28px;
  box-sizing: border-box;
  margin-left: ${(p) => p.$ml || 0}px;
  margin-top: ${(p) => p.$top || 0}px;
  background: #e1e1e1;
  border: 1px solid #adadad;
  display: flex;
  align-items: center;
  justify-content: center;
  white-space: nowrap;
  font-size: 12.7px;
`;

const Check = styled.span`
  flex: none;
  width: 16px;
  height: 16px;
  box-sizing: border-box;
  border: 1px solid #333;
  background: #fff;
  margin-right: 3px;
  display: flex;
  align-items: center;
  justify-content: center;
`;

const ReportLabel = styled.span`
  flex: none;
  width: 216px;
  white-space: nowrap;
  padding-top: 1px;
`;

const Dropdown = styled.div`
  flex: none;
  width: 254px;
  height: 25px;
  box-sizing: border-box;
  background: #fff;
  border: 1px solid #7a7a7a;
  display: flex;
  align-items: center;
  padding-left: 5px;
  justify-content: space-between;
`;

const Report = styled.div`
  flex: none;
  width: 479px;
  height: 609px;
  margin-left: 51px;
  margin-top: 8px;
  box-sizing: border-box;
  border-top: 2px solid #808080;
  border-left: 2px solid #808080;
  border-right: 1px solid #fff;
  border-bottom: 1px solid #fff;
  display: flex;
  flex-direction: column;
  font-size: 12.6px;
`;

const ReportScroll = styled.div`
  flex: 1;
  min-height: 0;
  overflow: hidden;
  padding: 1px 0 0 1px;
`;

const Line = styled.div`
  height: 17px;
  line-height: 17px;
  white-space: pre;
  padding-left: ${(p) => p.$pad || 0}px;
`;

const TableLine = styled.div`
  height: 17px;
  line-height: 17px;
  white-space: pre;
  display: grid;
  grid-template-columns: ${(p) => p.$cols};
  padding-left: ${(p) => p.$pad}px;
`;

const ReportBar = styled.div`
  flex: none;
  height: 20px;
  display: flex;
  background: #f0f0f0;
`;

const BottomRow = styled.div`
  flex: none;
  display: flex;
  margin-top: 11px;
  padding-left: 54px;
`;

const treeRows = [
  ['History', 'fHist', 1], ['Sensors', 'fSens'], ['Annotations', 'fAnno', 1], ['Solid Bodies(23)', 'fBody', 1],
  ['Polyester Resin', 'material'], ['Front Plane', 'plane'], ['Top Plane', 'plane'], ['Right Plane', 'plane'],
  ['Origin', 'origin'], ['Surface-Fill1', 'fill', 1], ['Plane1', 'plane'], ['Plane2', 'plane'], ['Plane3', 'plane'],
  ['Mirror1', 'mirror'], ['Mirror2', 'mirror'], ['Mirror3', 'mirror'], ['Surface-Fill2', 'fill'], ['Surface-Fill3', 'fill'],
  ['Surface-Fill4', 'fill'], ['Surface-Fill5', 'fill'], ['Surface-Fill6', 'fill'], ['Surface-Fill7', 'fill'],
  ['Surface-Knit1', 'knit'], ['Cut-Extrude1', 'cut', 1], ['Revolve1', 'revolve', 1], ['Cut-Extrude2', 'cut', 1],
  ['Cut-Extrude3', 'cut', 1], ['Cut-Extrude5', 'cut', 1],
];

const mainTabs = [
  ['Features', 74], ['Sketch', 63], ['Surfaces', 74], ['Sheet Metal', 98], ['Weldments', 94], ['Direct Editing', 109],
  ['Markup', 71], ['Evaluate', 81, true], ['MBD Dimensions', 136], ['SOLIDWORKS Add-Ins', 173], ['Simulation', 92],
  ['Analysis Preparation', 157], ['SOLIDWORKS CAM', 142],
];

const paletteOne = [
  ['boss', 1], ['cut', 1], 'rule', ['chamfer', 1], ['rib'], ['shell'], ['block'], ['wizard', 1], 'rule', ['pattern', 1],
  'rule', ['planeRef', 1], ['curve', 1], 'rule', ['ruler', 0, true], ['deform'],
];
const paletteTwo = [
  ['sketch3d'], ['sketchStar'], ['round'], ['starOff'], ['chamfer'], ['boss'], ['roundOff'], ['rib'], ['shell'], ['cut'],
  ['wizard'], ['chamfer'], ['planeRef', 1],
];
const paletteThree = [
  ['cubeOff'], ['cubeOff'], ['cubeOff'], ['cubeOff'], ['cubeOff'], ['cubeOff'], ['cubeOff'], 'rule', ['newSketch'],
  ['gearOff'], ['screenSwitch'], 'rule', ['winStack'], ['winStack2'],
];
const paletteFour = [['refPlane'], ['axisLine'], ['triad'], ['point'], ['com'], ['dashCube'], ['boxClip']];

const PaletteItems = ({ rows, caretGap, pl }) => rows.map((row, i) => {
  if (row === 'rule') return <PaletteRule key={i} />;
  const [name, caret, active] = row;
  return (
    <PaletteRow key={i} $pl={pl}>
      <PaletteButton $active={active}><Icon name={name} size={22} /></PaletteButton>
      {caret ? <PaletteCaret $ml={caretGap}><Caret /></PaletteCaret> : null}
    </PaletteRow>
  );
});

const Small = ({ icon, children, off, gap }) => (
  <SmallRow $off={off} $gap={gap}>
    <Icon name={icon} />
    {children}
  </SmallRow>
);

const Chevron = ({ d }) => (
  <Svg width="12" height="12" viewBox="0 0 12 12">
    <path d={d} fill="none" stroke="#606060" strokeWidth="1.7" />
  </Svg>
);

const NavGlyph = ({ d }) => (
  <Svg width="13" height="13" viewBox="0 0 12 12">
    <path d={d} fill="#7a7a92" stroke="#66667e" strokeWidth=".5" />
  </Svg>
);

const Dice = () => (
  <DiceSvg width="954" height="806" viewBox="410 140 954 806">
    <defs>
      <linearGradient id="bodyShade" x1="0" y1="0" x2="0" y2="1">
        <stop offset=".55" stopColor="#4e4e9b" />
        <stop offset=".8" stopColor="#4a4a94" />
        <stop offset="1" stopColor="#333366" />
      </linearGradient>
      <radialGradient id="glow">
        <stop offset="0" stopColor="#9b9bf2" />
        <stop offset=".45" stopColor="#7d7dd6" stopOpacity=".8" />
        <stop offset="1" stopColor="#6060b8" stopOpacity="0" />
      </radialGradient>
      <radialGradient id="cornerLeft">
        <stop offset="0" stopColor="#7a7ad0" />
        <stop offset="1" stopColor="#5a5aaa" stopOpacity="0" />
      </radialGradient>
      <radialGradient id="cornerRight">
        <stop offset="0" stopColor="#6464bc" />
        <stop offset="1" stopColor="#5a5aaa" stopOpacity="0" />
      </radialGradient>
      <radialGradient id="holeShade" cx=".3" cy=".45" r=".6">
        <stop offset="0" stopColor="#2c2c2c" />
        <stop offset="1" stopColor="#000" />
      </radialGradient>
      <clipPath id="silhouette">
        <path d="M750 85C850 85 950 130 1040 175L1220 280C1300 330 1380 390 1420 480C1450 560 1460 680 1460 790C1462 900 1462 1000 1440 1090C1415 1180 1340 1235 1270 1285C1130 1380 1000 1440 900 1480C840 1505 800 1513 750 1513C700 1513 650 1505 590 1480C500 1440 370 1380 230 1285C160 1235 85 1180 60 1090C38 1000 38 900 40 790C40 680 50 560 80 480C120 390 200 330 280 280L460 175C550 130 650 85 750 85Z" />
      </clipPath>
    </defs>
    <g transform="translate(660 170) scale(.4464 .4719)" stroke="#000" strokeWidth="1.2">
      <path vectorEffect="non-scaling-stroke" fill="url(#bodyShade)" d="M750 85C850 85 950 130 1040 175L1220 280C1300 330 1380 390 1420 480C1450 560 1460 680 1460 790C1462 900 1462 1000 1440 1090C1415 1180 1340 1235 1270 1285C1130 1380 1000 1440 900 1480C840 1505 800 1513 750 1513C700 1513 650 1505 590 1480C500 1440 370 1380 230 1285C160 1235 85 1180 60 1090C38 1000 38 900 40 790C40 680 50 560 80 480C120 390 200 330 280 280L460 175C550 130 650 85 750 85Z" />
      <g clipPath="url(#silhouette)" stroke="none">
        <ellipse cx="840" cy="760" rx="170" ry="150" fill="url(#glow)" />
        <ellipse cx="150" cy="430" rx="130" ry="130" fill="url(#cornerLeft)" />
        <ellipse cx="1400" cy="470" rx="130" ry="130" fill="url(#cornerRight)" />
      </g>
      <path vectorEffect="non-scaling-stroke" fill="#7777d3" d="M750 85C850 85 950 130 1040 175L1220 280C1280 320 1318 360 1318 395C1316 440 1250 490 1160 550C1040 620 900 703 750 703C600 703 460 620 340 550C250 490 186 440 186 395C186 360 220 320 280 280L460 175C550 130 650 85 750 85Z" />
      <path vectorEffect="non-scaling-stroke" fill="#343364" d="M130 530C220 535 330 600 470 680C590 750 680 830 705 960C720 1060 722 1250 716 1350C710 1430 680 1475 625 1475C580 1470 500 1435 420 1390C360 1355 290 1325 230 1285C160 1235 85 1180 60 1090C38 1000 38 900 40 790C40 680 50 570 80 550C95 535 110 530 130 530Z" />
      <path vectorEffect="non-scaling-stroke" fill="#4e4e9b" d="M1370 530C1280 535 1170 600 1030 680C910 750 820 830 795 960C780 1060 778 1250 784 1350C790 1430 820 1475 875 1475C920 1470 1000 1435 1080 1390C1140 1355 1210 1325 1270 1285C1340 1235 1415 1180 1440 1090C1462 1000 1462 900 1460 790C1460 680 1450 570 1420 550C1405 535 1390 530 1370 530Z" />
      <path vectorEffect="non-scaling-stroke" fill="none" d="M410 582L383 630M1092 582L1120 630M722 1188H782" />
      {[358, 751, 1145].map((cx) => (
        <g key={cx}>
          <ellipse vectorEffect="non-scaling-stroke" cx={cx} cy="395" rx="110" ry="60" fill="#5d5da9" />
          <ellipse cx={cx} cy="399" rx="109.5" ry="56" fill="url(#holeShade)" stroke="none" />
        </g>
      ))}
      {[228, 488, 620, 882, 1012, 1276].map((cx) => (
        <rect key={cx} x={cx - 2} y="392" width="4" height="2" fill="#222" stroke="none" />
      ))}
      {[[1320, 680, 31], [925, 1325, 31], [381, 1002, -31]].map(([cx, cy, rot]) => (
        <g key={cx} transform={`rotate(${rot} ${cx} ${cy})`}>
          <ellipse vectorEffect="non-scaling-stroke" cx={cx} cy={cy} rx="60" ry="105" fill="#6a6acc" />
          <ellipse cx={cx + (rot > 0 ? -2 : 2)} cy={cy - 1} rx="58" ry="103" fill="#000" stroke="none" />
        </g>
      ))}
      <g stroke="none" fill="#e05a95" fontFamily="Liberation Sans, sans-serif" fontSize="22">
        <text x="754" y="722">Ix</text>
        <text x="659" y="820">Iy</text>
        <text x="795" y="848">Iz</text>
      </g>
      <path d="M751 797V745" stroke="#e8558f" strokeWidth="11" />
      <path d="M751 797L695 812" stroke="#a04468" strokeWidth="10" />
      <path d="M751 797L778 827" stroke="#a04468" strokeWidth="10" />
      <path d="M744 755l8-18 8 18z" stroke="none" fill="#f6d8e4" />
      <path d="M700 803l-20 11 22 5zM768 830l20 7-7-18z" stroke="none" fill="#a04468" />
      <circle cx="751" cy="795" r="5" fill="#fff" stroke="none" />
    </g>
  </DiceSvg>
);

const AxisTriad = () => (
  <AxisSvg width="76" height="66" viewBox="0 0 76 66">
    <path d="M31 50V22" stroke="#2e8b3a" strokeWidth="4" />
    <path d="M31 14l4 8v5h-8v-5z" fill="#0b5a18" />
    <path d="M31 50L54 63" stroke="#9a0f14" strokeWidth="4" />
    <path d="M58 65l-12-1 4-7z" fill="#a10f14" />
    <path d="M31 50L7 64" stroke="#0a0abe" strokeWidth="4" />
    <path d="M2 66l13-2-4-7z" fill="#0a0abe" />
    <g fontFamily="Liberation Sans, sans-serif" fontSize="10">
      <text x="28" y="10" fill="#2e9a3a">Y</text>
      <text x="60" y="66" fill="#e34040">X</text>
      <text x="-3" y="66" fill="#2020d0">Z</text>
    </g>
  </AxisSvg>
);

const App = () => (
  <Page>
    <Global />
    <TopBar $h={30}>{iconRun(topItems)}</TopBar>
    <Ribbon>
      <BigButton $w={98} $pl={4}>
        <BigIconWrap><Icon name="bolts" /></BigIconWrap>
        <span>Design Study</span>
        <BigCaret><Caret /></BigCaret>
      </BigButton>
      <RibbonRule />
      <BigButton $w={85}><BigIconWrap><Icon name="interference" /></BigIconWrap>Interference<br />Detection</BigButton>
      <BigButton $w={72}><BigIconWrap><Icon name="scale" /></BigIconWrap>Mass<br />Properties</BigButton>
      <SmallColumn $w={91}>
        <Small icon="tape">Measure</Small>
        <Small icon="markup">Markup</Small>
        <Small icon="gauge">Sensor</Small>
      </SmallColumn>
      <SmallColumn $w={185}>
        <Small icon="sectProp">Section Properties</Small>
        <Small icon="importDiag" off>Import Diagnostics</Small>
        <Small icon="perf" gap={9}>Performance Evaluation</Small>
      </SmallColumn>
      <SmallColumn $w={152}>
        <Small icon="geomCube">Geometry Analysis</Small>
        <Small icon="bodyCompare">Body Compare</Small>
        <Small icon="checkCube">Check</Small>
      </SmallColumn>
      <RibbonRule />
      <BigButton $w={60}><BigIconWrap><Icon name="draft" /></BigIconWrap>Draft<br />Analysis</BigButton>
      <SmallColumn $w={140}>
        <Small icon="zebra" gap={6}>Zebra Stripes</Small>
        <Small icon="curvature" gap={6}>Curvature</Small>
        <Small icon="symmetry" gap={6}>Symmetry Check</Small>
      </SmallColumn>
      <SmallColumn $w={167}>
        <Small icon="undercut" gap={7}>Undercut Analysis</Small>
        <Small icon="parting" gap={7}>Parting Line Analysis</Small>
        <Small icon="thickness" gap={7}>Thickness Analysis</Small>
      </SmallColumn>
      <SmallColumn $w={39}>
        <Small icon="docQ" />
        <Small icon="checkX" gap={5}><Caret /></Small>
        <Small icon="cross" />
      </SmallColumn>
      <RibbonRule />
      <SmallColumn $w={270}>
        <Small icon="x3d" off gap={7}>3DEXPERIENCE Simulation Connector</Small>
        <Small icon="simX" gap={7}>SimulationXpress Analysis Wizard</Small>
        <Small icon="floX" gap={7}>FloXpress Analysis Wizard</Small>
      </SmallColumn>
    </Ribbon>
    <TabBar>
      {mainTabs.map(([label, w, active]) => (
        <MainTab key={label} $w={w} $active={active}>{label}</MainTab>
      ))}
    </TabBar>
    <Workspace>
      <ToolDock>
        <DockStack>
          <Palette $w={53} $h={366}><PaletteItems rows={paletteOne} caretGap={7} /></Palette>
          <Palette $w={34} $h={204}><PaletteItems rows={paletteFour} /></Palette>
        </DockStack>
        <Palette $w={53} $h={360}><PaletteItems rows={paletteTwo} caretGap={7} pl={6} /></Palette>
        <Palette $w={32} $h={350}><PaletteItems rows={paletteThree} /></Palette>
      </ToolDock>
      <RightPane>
        <PaneRow>
          <TreePanel>
            <SplitHeader><SplitDot /></SplitHeader>
            <TreeTabs>
              <TreeTab $active><Icon name="part" /></TreeTab>
              <TreeTab><Icon name="list" /></TreeTab>
              <TreeTab><Icon name="treeCfg" /></TreeTab>
              <TreeTab><Icon name="target" /></TreeTab>
              <TreeTab><Icon name="colorPie" /></TreeTab>
              <TreeTab $w={24}><Icon name="dim" /></TreeTab>
              <TreeScroller>
                <ScrollerButton>◀</ScrollerButton>
                <ScrollerButton>▶</ScrollerButton>
              </TreeScroller>
            </TreeTabs>
            <FilterBox><Icon name="funnel" size={20} /></FilterBox>
            <TreeBody>
              <TreeList>
                <RootRow><Icon name="part" size={20} />Dice Surface Model (Default) &lt;&lt;Default&gt;_Display State 1&gt;</RootRow>
                {treeRows.map(([label, icon, expand]) => (
                  <TreeRow key={label}>
                    <Expander $show={expand} />
                    <Icon name={icon} size={20} />
                    <RowLabel>{label}</RowLabel>
                  </TreeRow>
                ))}
              </TreeList>
              <VScroll>
                <ScrollArrow><Chevron d="M2 8l4-4 4 4" /></ScrollArrow>
                <VThumb />
                <VTrack />
                <ScrollArrow><Chevron d="M2 4l4 4 4-4" /></ScrollArrow>
              </VScroll>
            </TreeBody>
            <HScroll>
              <HArrow $w={21}><Chevron d="M8 2L4 6l4 4" /></HArrow>
              <HThumb $w={122} />
              <VTrack />
              <HArrow $w={21}><Chevron d="M4 2l4 4-4 4" /></HArrow>
            </HScroll>
            <TreeFoot />
          </TreePanel>
          <Viewport>
            <Dice />
            <ViewBar $h={22}>{iconRun(viewItems)}</ViewBar>
            <SplitHandle><SplitDot /></SplitHandle>
            <AxisTriad />
            <ViewName>*Isometric</ViewName>
          </Viewport>
        </PaneRow>
        <BottomTabs>
          <NavCluster>
            <NavButton><NavGlyph d="M2 2h2v8H2zM10 2v8L5 6z" /></NavButton>
            <NavButton><NavGlyph d="M9 1v10L3 6z" /></NavButton>
            <NavButton><NavGlyph d="M3 1v10l6-5z" /></NavButton>
            <NavButton><NavGlyph d="M2 2v8l5-4zM8 2h2v8H8z" /></NavButton>
          </NavCluster>
          <SheetTab $w={77} $active>Model</SheetTab>
          <SheetTab $w={89}>3D Views</SheetTab>
          <SheetTab $w={144} $pr={8}>Motion Study 1</SheetTab>
        </BottomTabs>
      </RightPane>
    </Workspace>

    <Dialog>
      <TitleBar>
        <Icon name="scale" size={20} />
        <TitleText>Mass Properties</TitleText>
        <WinButton viewBox="0 0 58 34"><path d="M23 14.5h12" stroke="#fff" /></WinButton>
        <WinButton viewBox="0 0 58 34"><rect x="23.5" y="9.5" width="11" height="11" fill="none" stroke="#3a3aff" /></WinButton>
        <WinButton viewBox="0 0 58 34"><path d="M23 9.5l12 12M35 9.5l-12 12" stroke="#fff" strokeWidth="1.2" /></WinButton>
      </TitleBar>
      <DialogBody>
        <FormRow $flush $align="flex-start">
          <PartSlot><Icon name="part" size={20} /></PartSlot>
          <SelectionBox>Dice Surface Model</SelectionBox>
          <Button $w={86} $ml={39} $top={27}>Options...</Button>
        </FormRow>
        <FormRow $mt={8} $pl={54}>
          <Button $w={224}>Override Mass Properties...</Button>
          <Button $w={105} $ml={22}>Recalculate</Button>
        </FormRow>
        <CheckRow $mt={13}>
          <Check>
            <Svg width="12" height="12" viewBox="0 0 12 12"><path d="M2 6l3 4 5-8" fill="none" stroke="#666" strokeWidth="1.3" /></Svg>
          </Check>
          Include hidden bodies/components
        </CheckRow>
        <CheckRow $mt={12}><Check />Create Center of Mass feature</CheckRow>
        <CheckRow $mt={13}><Check />Show weld bead mass</CheckRow>
        <FormRow $mt={8} $pl={58}>
          <ReportLabel>Report coordinate values relative to:</ReportLabel>
          <Dropdown>
            -- default --
            <Svg width="20" height="12" viewBox="0 0 20 12"><path d="M4 3l5 5 5-5" fill="none" stroke="#555" /></Svg>
          </Dropdown>
        </FormRow>
        <Report>
          <ReportScroll>
            <Line>Mass properties of Dice Surface Model</Line>
            <Line $pad={20}>Configuration: Default</Line>
            <Line $pad={20}>Coordinate system: -- default --</Line>
            <Line />
            <Line>Density =  0.00 grams per cubic millimeter</Line>
            <Line />
            <Line>Mass =  1.95 grams</Line>
            <Line />
            <Line>Volume =  1684.82 cubic millimeters</Line>
            <Line />
            <Line>Surface area =  1293.15  square millimeters</Line>
            <Line />
            <Line>Center of mass: ( millimeters )</Line>
            <Line $pad={25}>X = -6.00</Line>
            <Line $pad={25}>Y = 6.01</Line>
            <Line $pad={25}>Z = -6.00</Line>
            <Line />
            <Line>Principal axes of inertia and principal moments of inertia: ( grams *  square millimeters )</Line>
            <Line>Taken at the center of mass.</Line>
            <TableLine $pad={29} $cols="171px auto"><span>Ix = ( 0.00,  1.00, -0.08)</span><span>Px = 45.27</span></TableLine>
            <TableLine $pad={29} $cols="171px auto"><span>Iy = (-0.29,  0.08,  0.96)</span><span>Py = 45.34</span></TableLine>
            <TableLine $pad={29} $cols="171px auto"><span>Iz = ( 0.96,  0.02,  0.29)</span><span>Pz = 45.35</span></TableLine>
            <Line />
            <Line>Moments of inertia: ( grams *  square millimeters )</Line>
            <Line>Taken at the center of mass and aligned with the output coordinate system. (Using positive tensor notation.)</Line>
            <TableLine $pad={25} $cols="175px 175px auto"><span>Lxx = 45.35</span><span>Lxy = 0.00</span><span>Lxz = 0.00</span></TableLine>
            <TableLine $pad={25} $cols="175px 175px auto"><span>Lyx = 0.00</span><span>Lyy = 45.27</span><span>Lyz = -0.01</span></TableLine>
            <TableLine $pad={25} $cols="175px 175px auto"><span>Lzx = 0.00</span><span>Lzy = -0.01</span><span>Lzz = 45.34</span></TableLine>
            <Line />
            <Line>Moments of inertia: ( grams *  square millimeters )</Line>
            <Line>Taken at the output coordinate system. (Using positive tensor notation.)</Line>
            <TableLine $pad={25} $cols="175px 175px auto"><span>Ixx = 186.25</span><span>Ixy = -70.45</span><span>Ixz = 70.34</span></TableLine>
            <TableLine $pad={25} $cols="175px 175px auto"><span>Iyx = -70.45</span><span>Iyy = 185.96</span><span>Iyz = -70.45</span></TableLine>
            <TableLine $pad={25} $cols="175px 175px auto"><span>Izx = 70.34</span><span>Izy = -70.45</span><span>Izz = 186.24</span></TableLine>
          </ReportScroll>
          <ReportBar>
            <HArrow $w={21}><Chevron d="M8 2L4 6l4 4" /></HArrow>
            <HThumb $w={326} />
            <VTrack />
            <HArrow $w={21}><Chevron d="M4 2l4 4-4 4" /></HArrow>
          </ReportBar>
        </Report>
        <BottomRow>
          <Button $w={103}>Help</Button>
          <Button $w={107} $ml={68}>Print...</Button>
          <Button $w={142} $ml={56}>Copy to Clipboard</Button>
        </BottomRow>
      </DialogBody>
    </Dialog>
  </Page>
);

export default App;
